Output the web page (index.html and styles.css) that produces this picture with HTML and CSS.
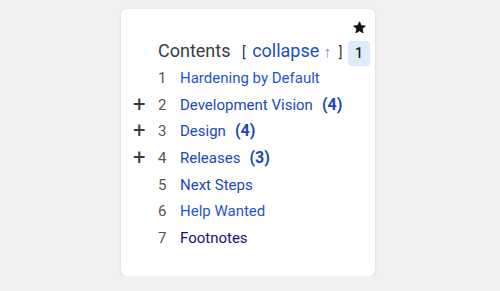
FILE: index.html
```html
<!DOCTYPE html>
<html lang="en">
<head>
  <meta charset="UTF-8">
  <title>Contents</title>
  <link rel="stylesheet" href="styles.css">
</head>
<body>
  <!-- Table of contents card -->
  <div class="toc-card">
    <nav class="toc">
      <div class="toc-title">
        Contents
        <span class="bracket">[</span>
        <a href="#" class="collapse">collapse <span class="arrow">↑</span></a>
        <span class="bracket end">]</span>
      </div>
      <ol class="toc-list">
        <li><span class="toggle"></span><span class="num">1</span><a href="#" class="bright">Hardening by Default</a></li>
        <li><span class="toggle">+</span><span class="num">2</span><a href="#">Development Vision</a><span class="count">(4)</span></li>
        <li><span class="toggle">+</span><span class="num">3</span><a href="#">Design</a><span class="count">(4)</span></li>
        <li><span class="toggle">+</span><span class="num">4</span><a href="#">Releases</a><span class="count">(3)</span></li>
        <li><span class="toggle"></span><span class="num">5</span><a href="#">Next Steps</a></li>
        <li><span class="toggle"></span><span class="num">6</span><a href="#" class="bright">Help Wanted</a></li>
        <li><span class="toggle"></span><span class="num">7</span><a href="#" class="visited">Footnotes</a></li>
      </ol>
    </nav>
    <div class="side">
      <svg class="star" width="13" height="13" viewBox="0 0 24 24">
        <path d="M12 1.5l3.2 7 7.6.8-5.7 5.1 1.6 7.6L12 18.1 5.3 22l1.6-7.6L1.2 9.3l7.6-.8z" fill="#111" stroke="#111" stroke-width="1.5" stroke-linejoin="round"/>
      </svg>
      <span class="badge">1</span>
    </div>
  </div>
</body>
</html>
```

FILE: styles.css
```css
* {
  margin: 0;
  padding: 0;
  box-sizing: border-box;
}

body {
  font-family: Roboto, "Liberation Sans", sans-serif;
  background-color: #f1f1f1;
  color: #444;
}

/* Card */
.toc-card {
  display: flex;
  width: 254px;
  height: 267px;
  margin: 9px 0 0 121px;
  padding: 12px 5px 0 12px;
  background-color: #fff;
  border-radius: 6px;
  box-shadow: 0 1px 4px rgba(0, 0, 0, 0.12);
}

.toc {
  flex: 1;
  min-width: 0;
  padding-top: 18px;
}

/* Heading */
.toc-title {
  margin-left: 25px;
  font-size: 18px;
  line-height: 24px;
  white-space: nowrap;
  color: #3a3d44;
}

.toc-title .bracket {
  font-size: 14px;
  margin: 0 2px 0 7px;
  color: #333;
}

.toc-title .bracket.end {
  margin-left: 3px;
}

.collapse {
  color: #1b4fc2;
  text-decoration: none;
}

.collapse .arrow {
  font-size: 15px;
  color: #8a7ad0;
}

/* List */
.toc-list {
  list-style: none;
  margin-top: 1px;
}

.toc-list li {
  display: flex;
  align-items: center;
  height: 26.7px;
  font-size: 15px;
  line-height: 26.7px;
  white-space: nowrap;
}

.toggle {
  width: 25px;
  font-size: 22px;
  color: #3a3a3a;
}

.num {
  width: 22px;
  color: #555;
}

.toc-list a {
  color: #1a4ab8;
  text-decoration: none;
}

.toc-list a.bright {
  color: #1f55d4;
}

.toc-list a.visited {
  color: #1c0f7a;
}

.count {
  margin-left: 9px;
  font-size: 16px;
  font-weight: bold;
  color: #1a4ab8;
}

/* Star and badge */
.side {
  display: flex;
  flex-direction: column;
  align-items: center;
  gap: 7px;
}

.badge {
  width: 22px;
  height: 25px;
  line-height: 25px;
  text-align: center;
  font-size: 14px;
  font-weight: 500;
  color: #222;
  background-color: #ddebfb;
  border-radius: 4px;
}
```
